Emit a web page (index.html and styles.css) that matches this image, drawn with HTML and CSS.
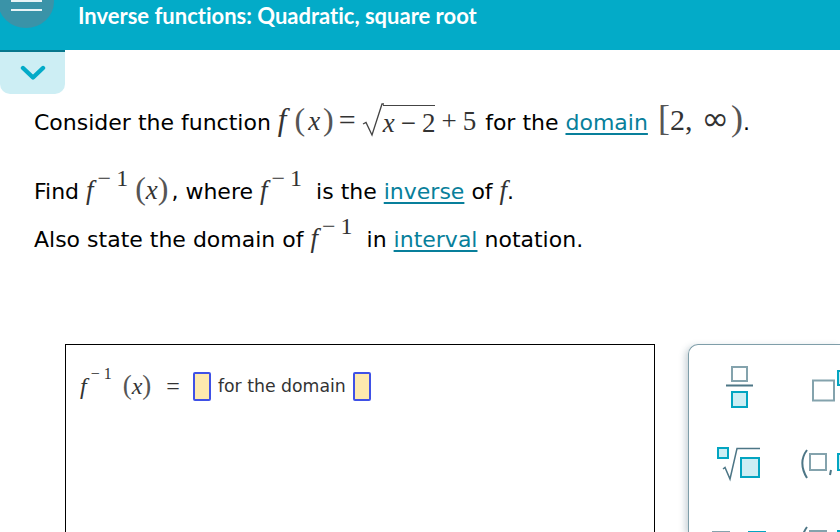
FILE: index.html
```html
<!DOCTYPE html>
<html lang="en">
<head>
    <meta charset="UTF-8">
    <meta name="viewport" content="width=device-width, initial-scale=1.0">
    <title>Inverse functions: Quadratic, square root</title>
    <link rel="stylesheet" href="styles.css">
</head>
<body>
    <header class="topbar">
        <div class="menu-btn"><span class="menu-line"></span><span class="menu-line"></span></div>
        <h1 class="topic">Inverse functions: Quadratic, square root</h1>
    </header>
    <div class="tab">
        <svg width="26" height="16" viewBox="0 0 26 16"><path d="M3 3 L13 12.500 L23 3" fill="none" stroke="#03abc8" stroke-width="4.400" stroke-linecap="round" stroke-linejoin="round"/></svg>
    </div>

    <main class="question">
        <p class="line line-first">Consider the function <span class="m m-main"><i class="f1">f</i><span class="paren p1">(</span><i>x</i><span class="paren p2">)</span><span class="op">=</span><span class="root"><svg class="radical" width="22" height="34" viewBox="0 0 22 34"><path d="M1 21 L4 19.500 L10 32 L20 1 L22 1" fill="none" stroke="#444" stroke-width="1.300"/></svg><span class="radicand"><i>x</i><span class="minus">−</span>2</span></span><span class="plus">+</span>5</span> for the <a class="link">domain</a> <span class="m m-set"><span class="bracket">[</span>2<span class="comma">,</span><span class="inf">∞</span><span class="bracket close">)</span></span>.</p>
        <p class="line line-second">Find <span class="m m-call"><i>f</i><span class="sup">−<span class="one">1</span></span><span class="paren pl">(</span><i>x</i><span class="paren">)</span></span>, where <span class="m"><i>f</i><span class="sup">−<span class="one">1</span></span></span> <span class="gap">is the</span> <a class="link">inverse</a> of <span class="m"><i>f</i></span>.</p>
        <p class="line line-third">Also state the domain of <span class="m"><i>f</i><span class="sup">−<span class="one">1</span></span></span> <span class="gap">in</span> <a class="link">interval</a> notation.</p>
    </main>

    <section class="work">
        <div class="answer">
            <span class="m m-answer"><i>f</i><span class="sup sup-small">−<span class="one">1</span></span><span class="paren pl">(</span><i>x</i><span class="paren">)</span><span class="eq">=</span></span>
            <span class="slot"></span>
            <span class="for-text">for the domain</span>
            <span class="slot"></span>
        </div>
        <aside class="palette">
            <div class="tool tool-frac">
                <svg width="28" height="44" viewBox="0 0 28 44"><rect x="6" y="2" width="15" height="14" fill="#fff" stroke="#84a3ad" stroke-width="2"/><rect x="0" y="19.500" width="27" height="2" fill="#4d7686"/><rect x="6" y="27" width="15" height="15" fill="#cdeef4" stroke="#03a5c1" stroke-width="2"/></svg>
            </div>
            <div class="tool tool-exp">
                <svg width="27" height="34" viewBox="0 0 27 34"><rect x="0" y="10.500" width="21" height="20" fill="#fff" stroke="#84a3ad" stroke-width="2"/><rect x="25" y="1" width="12" height="14" fill="#cdeef4" stroke="#03a5c1" stroke-width="2"/></svg>
            </div>
            <div class="tool tool-root">
                <svg width="44" height="34" viewBox="0 0 44 34"><rect x="1" y="1" width="10" height="10" fill="#cdeef4" stroke="#03a5c1" stroke-width="2"/><path d="M6 22 L8 20.500 L13 32 L20 1.500 L43 1.500" fill="none" stroke="#4d7686" stroke-width="1.500"/><rect x="24" y="11" width="18" height="19" fill="#cdeef4" stroke="#03a5c1" stroke-width="2"/></svg>
            </div>
            <div class="tool tool-interval">
                <svg width="44" height="30" viewBox="0 0 44 30"><path d="M7 1 C1 9 1 19 7 29" fill="none" stroke="#4d7686" stroke-width="2"/><rect x="10" y="5" width="16" height="16" fill="#fff" stroke="#84a3ad" stroke-width="2"/><path d="M31 21 L30 26" stroke="#4d7686" stroke-width="2"/><rect x="38" y="5" width="16" height="16" fill="#cdeef4" stroke="#03a5c1" stroke-width="2"/></svg>
            </div>
            <div class="tool tool-pair">
                <span class="chip chip-grey"></span><span class="chip chip-teal"></span>
            </div>
            <div class="tool tool-interval">
                <svg width="44" height="30" viewBox="0 0 44 30"><path d="M7 1 C1 9 1 19 7 29" fill="none" stroke="#4d7686" stroke-width="2"/><rect x="10" y="5" width="16" height="16" fill="#fff" stroke="#84a3ad" stroke-width="2"/><rect x="38" y="5" width="16" height="16" fill="#cdeef4" stroke="#03a5c1" stroke-width="2"/></svg>
            </div>
        </aside>
    </section>
</body>
</html>
```

FILE: styles.css
```css
html, body {
    margin: 0;
    height: 532px;
    overflow: hidden;
    background: #fff;
}
body {
    font-family: "DejaVu Sans", Verdana, sans-serif;
    font-size: 22px;
    color: #000;
}
.topbar {
    position: relative;
    height: 50px;
    background: #03abc8;
    display: flex;
}
.menu-btn {
    position: absolute;
    left: -2px;
    top: -25px;
    width: 56px;
    height: 53px;
    border-radius: 50%;
    background: #3a93a8;
    display: flex;
    flex-direction: column;
    align-items: center;
    justify-content: flex-end;
    gap: 7px;
    padding-bottom: 17px;
    box-sizing: border-box;
}
.menu-line {
    display: block;
    width: 31px;
    height: 2px;
    background: #e8f4f6;
}
.topic {
    margin: 3px 0 0 78px;
    font-family: Lato, sans-serif;
    font-size: 22px;
    line-height: 26px;
    font-weight: 700;
    font-variant-ligatures: none;
    color: #fff;
}
.tab {
    width: 65px;
    height: 44px;
    background: #cdeef4;
    border-top: 2px solid #07778c;
    box-sizing: border-box;
    border-radius: 0 0 10px 10px;
    display: flex;
    justify-content: center;
    padding-top: 13px;
}
.tab svg {
    display: block;
}
.question {
    height: 250px;
    padding-left: 34px;
}
.line {
    margin: 0;
    white-space: nowrap;
    height: 28px;
    line-height: 28px;
}
.line-first {
    padding-top: 9px;
    height: 32px;
    line-height: 32px;
}
.line-second {
    margin-top: 41px;
}
.line-third {
    margin-top: 20px;
}
.link {
    color: #087f9b;
    text-decoration: underline;
    text-underline-offset: 3px;
    text-decoration-thickness: 2px;
}
.gap {
    margin-left: 7px;
}
.m {
    font-family: "Liberation Serif", "Times New Roman", serif;
    font-size: 27px;
    color: #333;
}
.m i {
    font-style: italic;
}
.m-main {
    margin-right: 2px;
}
.m-call {
    margin-right: 3px;
}
.f1 {
    font-size: 31px;
}
.paren {
    font-size: 32px;
    font-weight: 400;
    color: #555;
    line-height: 0;
}
.p1 {
    margin: 0 3px 0 8px;
}
.p2 {
    margin-left: 3px;
}
.pl {
    margin-left: 7px;
}
.op {
    margin: 0 6px 0 5px;
    font-size: 30px;
    line-height: 0;
}
.root {
    display: inline-flex;
    align-items: flex-end;
    vertical-align: -7px;
    line-height: 1;
}
.radical {
    display: block;
}
.radicand {
    border-top: 1.500px solid #444;
    margin-left: -1px;
    padding-top: 4px;
    line-height: 27px;
    height: 27px;
}
.minus {
    margin: 0 6px;
}
.plus {
    margin: 0 6px 0 6px;
}
.m-set {
    font-size: 30px;
    margin-left: 3px;
}
.bracket {
    font-size: 36px;
    color: #555;
    line-height: 0;
}
.close {
    margin-left: 2px;
}
.comma {
    margin-right: 9px;
}
.inf {
    font-family: "DejaVu Sans", sans-serif;
    font-size: 33px;
    line-height: 0;
}
.sup {
    font-size: 24px;
    vertical-align: 13px;
    line-height: 0;
    margin-left: 4px;
}
.one {
    margin-left: 5px;
}
.work {
    display: flex;
    gap: 33px;
    margin-left: 65px;
}
.answer {
    width: 590px;
    height: 188px;
    box-sizing: border-box;
    border: 1px solid #000;
    border-bottom: 0;
    padding: 27px 14px 0;
    display: flex;
    align-items: flex-start;
    gap: 7px;
    font-size: 17.300px;
    color: #333;
}
.m-answer {
    font-size: 24px;
    line-height: 28px;
    height: 28px;
    white-space: nowrap;
}
.m-answer .paren {
    font-size: 27px;
}
.m-answer .pl {
    margin-left: 11px;
}
.sup-small {
    font-size: 16px;
    vertical-align: 15px;
    margin-left: 4px;
}
.sup-small .one {
    margin-left: 4px;
}
.eq {
    margin: 0 6px 0 15px;
}
.slot {
    display: block;
    flex: none;
    width: 14px;
    height: 25px;
    background: #fde9ae;
    border: 2px solid #3f51e6;
    border-radius: 2px;
}
.for-text {
    line-height: 28px;
    white-space: nowrap;
}
.palette {
    width: 152px;
    height: 188px;
    flex: none;
    overflow: hidden;
    box-sizing: border-box;
    border: 1px solid #7f9ea9;
    border-width: 1px 0 0 1px;
    border-radius: 10px 0 0 0;
    box-shadow: -3px 2px 6px rgba(90, 120, 135, 0.3);
    display: grid;
    grid-template-columns: 104px 47px;
    grid-auto-rows: 77px;
    align-items: center;
    padding-top: 3px;
}
.tool svg {
    display: block;
    overflow: visible;
}
.tool-frac {
    margin-left: 37px;
}
.tool-exp {
    margin-left: 20px;
}
.tool-root {
    margin-left: 28px;
}
.tool-interval {
    margin-left: 7px;
}
.tool-pair {
    display: flex;
    margin: -2px 0 0 23px;
    gap: 18px;
}
.chip {
    display: block;
    flex: none;
    width: 18px;
    height: 18px;
    box-sizing: border-box;
}
.chip-grey {
    background: #fff;
    border: 2px solid #84a3ad;
}
.chip-teal {
    background: #cdeef4;
    border: 2px solid #03a5c1;
}
```
